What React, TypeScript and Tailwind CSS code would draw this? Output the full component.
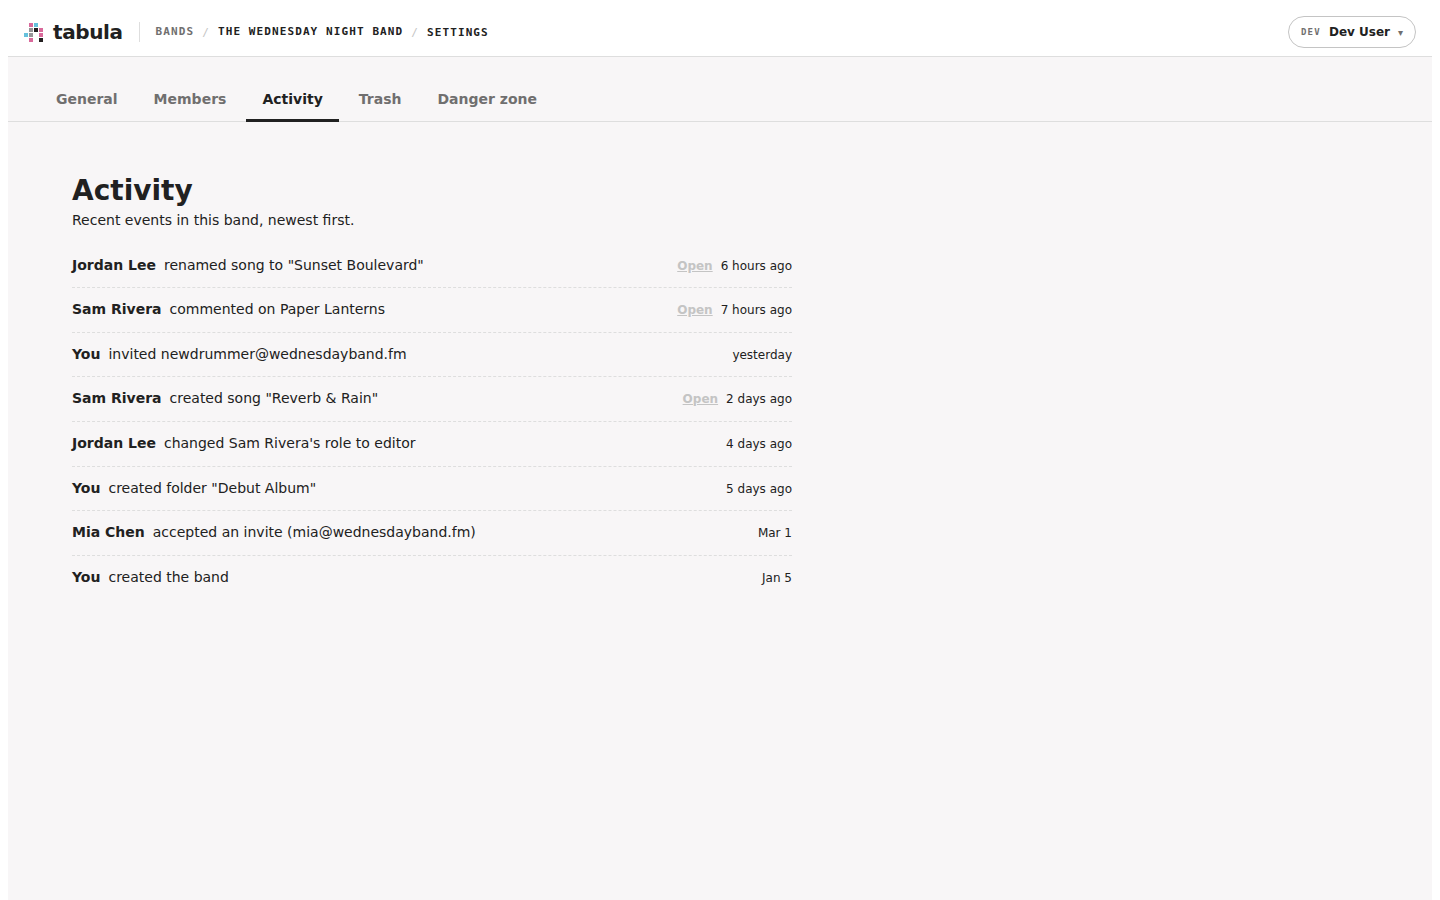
import type { ReactNode } from 'react'
import { clsx } from 'clsx'

type ActivityEvent = {
  actor: string
  summary: string
  when: string
  linked?: boolean
}

const tabs = ['General', 'Members', 'Activity', 'Trash', 'Danger zone']

const events: ActivityEvent[] = [
  { actor: 'Jordan Lee', summary: 'renamed song to "Sunset Boulevard"', when: '6 hours ago', linked: true },
  { actor: 'Sam Rivera', summary: 'commented on Paper Lanterns', when: '7 hours ago', linked: true },
  { actor: 'You', summary: 'invited newdrummer@wednesdayband.fm', when: 'yesterday' },
  { actor: 'Sam Rivera', summary: 'created song "Reverb & Rain"', when: '2 days ago', linked: true },
  { actor: 'Jordan Lee', summary: "changed Sam Rivera's role to editor", when: '4 days ago' },
  { actor: 'You', summary: 'created folder "Debut Album"', when: '5 days ago' },
  { actor: 'Mia Chen', summary: 'accepted an invite (mia@wednesdayband.fm)', when: 'Mar 1' },
  { actor: 'You', summary: 'created the band', when: 'Jan 5' },
]

// x, y, fill on a 4x4 grid of 5px cells
const logoCells: [number, number, string][] = [
  [5, 0, '#d9699b'],
  [10, 0, '#66c1dc'],
  [5, 5, '#969497'],
  [10, 5, '#231f20'],
  [15, 5, '#d9699b'],
  [0, 10, '#66c1dc'],
  [5, 10, '#969497'],
  [15, 10, '#d9699b'],
  [5, 15, '#d9699b'],
  [15, 15, '#231f20'],
]

function Logo() {
  return (
    <a className="flex items-center gap-2.5">
      <svg width="19" height="19" viewBox="0 0 19 19" shapeRendering="crispEdges" aria-hidden="true">
        {logoCells.map(([x, y, fill]) => (
          <rect key={`${x}-${y}`} x={x} y={y} width="4" height="4" fill={fill} />
        ))}
      </svg>
      <span className="text-[20px] leading-7 font-bold tracking-[-0.4px]">tabula</span>
    </a>
  )
}

function Crumb({ children, className }: { children: ReactNode; className?: string }) {
  return <span className={clsx('font-bold', className)}>{children}</span>
}

function TopBar() {
  return (
    <header className="flex h-[57px] items-center justify-between border-b border-[#dedede] bg-white px-4 pt-2">
      <div className="flex items-center">
        <Logo />
        <span className="ml-4 h-5 w-px bg-[#dedede]" />
        <nav className="ml-4 flex items-center gap-2 pt-0.5 font-['DejaVu_Sans_Mono',monospace] text-[11px] leading-4 tracking-[0.1em] uppercase">
          <Crumb className="pb-0.5 text-[#706f6f]">Bands</Crumb>
          <span className="text-[#c4c4c4]">/</span>
          <Crumb className="pb-0.5">The Wednesday Night Band</Crumb>
          <span className="text-[#c4c4c4]">/</span>
          <Crumb>Settings</Crumb>
        </nav>
      </div>
      <button type="button" className="flex h-8 items-center gap-2 rounded-full border border-[#c4c4c4] px-3">
        <span className="pt-px font-['DejaVu_Sans_Mono',monospace] text-[9px] font-bold tracking-[0.14em] text-[#706f6f]">
          DEV
        </span>
        <span className="text-xs font-bold">Dev User</span>
        <span className="pt-px text-[10px] leading-[14px] text-[#706f6f]">▾</span>
      </button>
    </header>
  )
}

function Tabs({ active }: { active: string }) {
  return (
    <nav className="flex h-[65px] items-end border-b border-[#dedede] px-8">
      {tabs.map((tab) => (
        <a
          key={tab}
          className={clsx(
            '-mb-px mr-1 border-b-[3px] px-4 pt-3 pb-[9px] text-sm leading-[19.6px] font-bold',
            tab === active ? 'border-[#212121] text-[#212121]' : 'border-transparent text-[#706f6f]',
          )}
        >
          {tab}
        </a>
      ))}
    </nav>
  )
}

function EventRow({ event }: { event: ActivityEvent }) {
  return (
    <li className="flex items-baseline gap-2 border-b border-dashed border-[#dedede] py-3 text-sm leading-[19.6px] last:border-b-0">
      <strong className="font-bold">{event.actor}</strong>
      <span className="flex-1">{event.summary}</span>
      {event.linked && <a className="text-xs leading-[16.8px] font-bold text-[#c4c4c4] underline">Open</a>}
      <time className="text-xs leading-[16.8px]">{event.when}</time>
    </li>
  )
}

export default function App() {
  return (
    <div className="min-h-screen bg-white px-2 font-['DejaVu_Sans',sans-serif] text-[#212121]">
      <div className="flex min-h-screen flex-col bg-[#f8f6f7]">
        <TopBar />
        <Tabs active="Activity" />
        <main className="w-[848px] px-16 pt-12">
          <h1 className="text-[28px] leading-[41px] font-bold">Activity</h1>
          <p className="text-sm leading-[19.6px]">Recent events in this band, newest first.</p>
          <ul className="mt-[13px]">
            {events.map((event) => (
              <EventRow key={`${event.actor}-${event.when}`} event={event} />
            ))}
          </ul>
        </main>
      </div>
    </div>
  )
}
